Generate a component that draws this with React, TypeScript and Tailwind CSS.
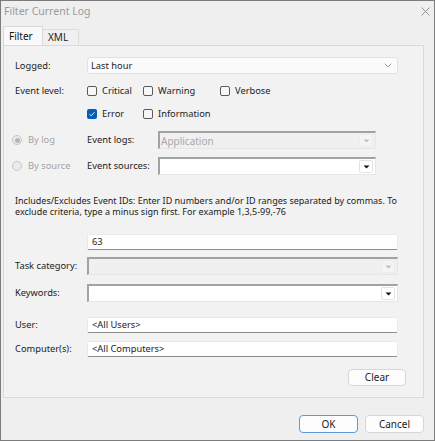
import React from 'react';

// Filter Current Log dialog (Event Viewer)

function Checkbox({ checked, label }: { checked?: boolean; label: string }) {
  return (
    <div className="flex items-center gap-[5px]">
      {checked ? (
        <span className="flex h-[10px] w-[10px] items-center justify-center rounded-[2px] bg-[#005fb8]">
          <svg width="8" height="8" viewBox="0 0 8 8">
            <path d="M1.5 4.2 L3.2 5.8 L6.5 2.2" fill="none" stroke="#fff" strokeWidth="0.9" />
          </svg>
        </span>
      ) : (
        <span className="h-[10px] w-[10px] rounded-[2px] border border-[#5a5a5a] bg-[#f7f7f7]" />
      )}
      <span>{label}</span>
    </div>
  );
}

function Radio({ checked, label }: { checked?: boolean; label: string }) {
  return (
    <div className="flex items-center gap-[6px] text-[#a3a3a3]">
      <span className="flex h-[10px] w-[10px] items-center justify-center rounded-full border border-[#c6c6c6] bg-[#ececec]">
        {checked && <span className="h-[5px] w-[5px] rounded-full bg-[#b5b5b5]" />}
      </span>
      <span>{label}</span>
    </div>
  );
}

function Triangle({ color }: { color: string }) {
  return (
    <svg width="7" height="4" viewBox="0 0 7 4">
      <path d="M0.5 0.5 L6.5 0.5 L3.5 3.5 Z" fill={color} />
    </svg>
  );
}

function SunkenCombo({ disabled, value, className }: { disabled?: boolean; value?: string; className?: string }) {
  return (
    <div
      className={
        'flex h-[18px] items-center border-t-2 border-l-2 border-r border-b border-t-[#a2a2a2] border-l-[#a2a2a2] border-r-[#e6e6e6] border-b-[#e6e6e6] pl-[1px] pr-[2px] ' +
        (disabled ? 'bg-[#f0f0f0] text-[#a8a8a8] ' : 'bg-white ') +
        (className ?? '')
      }
    >
      <span className="flex-1 text-[10px] leading-none">{value}</span>
      <span
        className={
          'flex h-[13px] w-[14px] items-center justify-center rounded-[2px] border ' +
          (disabled ? 'border-[#ececec] bg-[#f4f4f4]' : 'border-[#e3e3e3] bg-white')
        }
      >
        <Triangle color={disabled ? '#c0c0c0' : '#111'} />
      </span>
    </div>
  );
}

function TextBox({ value }: { value?: string }) {
  return (
    <div className="flex h-[16px] items-center rounded-[2px] border border-[#eaeaea] border-b-[#8c8c8c] bg-white px-[4px]">
      {value}
    </div>
  );
}

function Button({ label, primary, className }: { label: string; primary?: boolean; className?: string }) {
  return (
    <div
      className={
        'flex items-center justify-center rounded-[4px] border bg-[#fdfdfd] text-[10px] ' +
        (primary ? 'border-[#5b9ad6] ' : 'border-[#d6d6d6] ') +
        (className ?? '')
      }
    >
      {label}
    </div>
  );
}

export default function App() {
  return (
    <div className="flex h-[441px] w-[435px] flex-col border border-[#7c7c7c] bg-[#efefef] font-['Noto_Sans',sans-serif] text-[9.3px] text-[#1b1b1b]">
      {/* title bar */}
      <div className="flex h-[21px] shrink-0 items-center justify-between pl-[3px] pr-[4px]">
        <span className="text-[10.5px] text-[#9b9b9b]">Filter Current Log</span>
        <svg width="9" height="9" viewBox="0 0 9 9">
          <path d="M0.5 0.5 L8.5 8.5 M8.5 0.5 L0.5 8.5" stroke="#8a8a8a" strokeWidth="0.9" />
        </svg>
      </div>

      {/* tabs */}
      <div className="flex h-[23px] shrink-0 items-end pl-[2px] text-[10px]">
        <div className="flex h-[19px] w-[40px] items-center border border-b-0 border-[#d9d9d9] bg-[#f9f9f9] pl-[5px] text-[#111]">
          Filter
        </div>
        <div className="flex h-[16px] w-[36px] items-center border border-b-0 border-l-0 border-[#dcdcdc] bg-[#f0f0f0] pl-[5px]">
          XML
        </div>
      </div>

      {/* panel */}
      <div className="ml-[2px] flex h-[353px] w-[421px] shrink-0 flex-col border border-[#dadada] bg-[#f2f2f2] pl-[11px] pr-[25px] pt-[11px]">
        <div className="flex h-[17px] items-center">
          <span className="w-[72px]">Logged:</span>
          <div className="flex h-[17px] flex-1 items-center rounded-[3px] border border-[#e2e2e2] bg-[#fbfbfb] pl-[3px] pr-[5px]">
            <span className="flex-1">Last hour</span>
            <svg width="8" height="5" viewBox="0 0 8 5">
              <path d="M0.7 0.7 L4 4 L7.3 0.7" fill="none" stroke="#8d8d8d" strokeWidth="0.9" />
            </svg>
          </div>
        </div>

        <div className="mt-[10px] flex">
          <span className="w-[72px] leading-[14px]">Event level:</span>
          <div className="grid grid-cols-[56px_77px_auto] gap-y-[9px] leading-[14px]">
            <Checkbox label="Critical" />
            <Checkbox label="Warning" />
            <Checkbox label="Verbose" />
            <Checkbox checked label="Error" />
            <Checkbox label="Information" />
          </div>
        </div>

        <div className="ml-[-3px] mt-[10px] flex h-[18px] items-center">
          <div className="w-[75px]">
            <Radio checked label="By log" />
          </div>
          <span className="w-[71px]">Event logs:</span>
          <SunkenCombo disabled value="Application" className="w-[218px]" />
        </div>
        <div className="ml-[-3px] mt-[8px] flex h-[18px] items-center">
          <div className="w-[75px]">
            <Radio label="By source" />
          </div>
          <span className="w-[71px]">Event sources:</span>
          <SunkenCombo className="w-[218px]" />
        </div>

        <p className="mt-[20px] whitespace-nowrap text-[9px] leading-[11px]">
          Includes/Excludes Event IDs: Enter ID numbers and/or ID ranges separated by commas. To
          <br />
          exclude criteria, type a minus sign first. For example 1,3,5-99,-76
        </p>

        <div className="ml-[72px] mt-[17px]">
          <TextBox value="63" />
        </div>

        <div className="mt-[7px] flex items-center">
          <span className="w-[72px]">Task category:</span>
          <SunkenCombo disabled className="flex-1" />
        </div>
        <div className="mt-[9px] flex items-center">
          <span className="w-[72px]">Keywords:</span>
          <SunkenCombo className="flex-1" />
        </div>

        <div className="mt-[15px] flex items-center">
          <span className="w-[72px]">User:</span>
          <div className="flex-1">
            <TextBox value="<All Users>" />
          </div>
        </div>
        <div className="mt-[8px] flex items-center">
          <span className="w-[72px]">Computer(s):</span>
          <div className="flex-1">
            <TextBox value="<All Computers>" />
          </div>
        </div>

        <div className="mr-[-8px] mt-[12px] flex justify-end">
          <Button label="Clear" className="h-[17px] w-[58px]" />
        </div>
      </div>

      {/* dialog buttons */}
      <div className="mt-[17px] flex justify-end gap-[7px] pr-[10px]">
        <Button primary label="OK" className="h-[18px] w-[59px]" />
        <Button label="Cancel" className="h-[18px] w-[59px]" />
      </div>
    </div>
  );
}
